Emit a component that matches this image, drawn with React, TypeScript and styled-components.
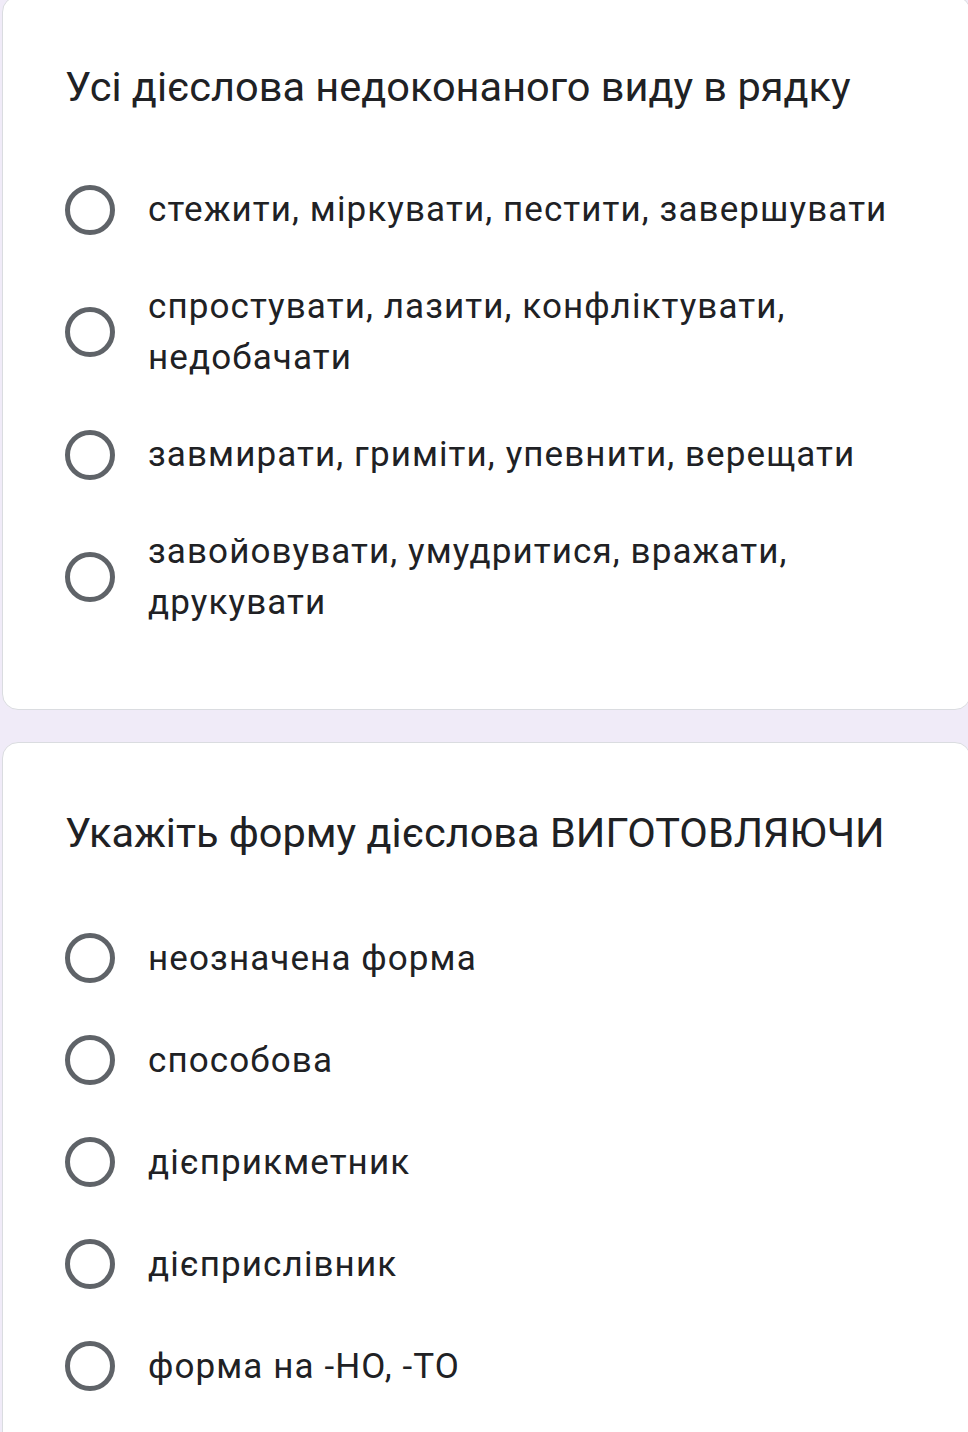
import React from "react";
import styled, { createGlobalStyle } from "styled-components";

const GlobalStyle = createGlobalStyle`
  html, body {
    margin: 0;
    padding: 0;
    background: #f0ebf8;
    overflow-x: hidden;
  }
`;

const Page = styled.main`
  display: flex;
  flex-direction: column;
  gap: 32px;
  margin-top: -4px;
  padding-left: 2px;
  width: calc(100% + 3px);
  box-sizing: border-box;
`;

const Card = styled.section`
  background: #ffffff;
  border: 1px solid #dadce0;
  border-radius: 16px;
  padding: 64px 48px 58px 62px;
`;

const Title = styled.h2`
  margin: 0 0 48px 0;
  font-family: Roboto, "Noto Sans", sans-serif;
  font-weight: 400;
  font-size: 41.5px;
  line-height: 52px;
  color: #202124;
`;

const OptionList = styled.div`
  display: flex;
  flex-direction: column;
`;

const Option = styled.label<{ $compact?: boolean }>`
  display: flex;
  align-items: center;
  gap: 33px;
  padding: ${({ $compact }) => ($compact ? "23px 0" : "25.5px 0")};
`;

const Radio = styled.span`
  flex: none;
  width: 50px;
  height: 50px;
  box-sizing: border-box;
  border: 5px solid #5f6368;
  border-radius: 50%;
`;

const OptionText = styled.span`
  max-width: 780px;
  font-family: Roboto, "Noto Sans", sans-serif;
  font-size: 35px;
  line-height: 51px;
  letter-spacing: 1.1px;
  color: #202124;
`;

const questions = [
  {
    title: "Усі дієслова недоконаного виду в рядку",
    compact: true,
    options: [
      "стежити, міркувати, пестити, завершувати",
      "спростувати, лазити, конфліктувати, недобачати",
      "завмирати, гриміти, упевнити, верещати",
      "завойовувати, умудритися, вражати, друкувати",
    ],
  },
  {
    title: "Укажіть форму дієслова ВИГОТОВЛЯЮЧИ",
    compact: false,
    options: [
      "неозначена форма",
      "способова",
      "дієприкметник",
      "дієприслівник",
      "форма на -НО, -ТО",
    ],
  },
];

function App() {
  return (
    <>
      <GlobalStyle />
      <Page>
        {questions.map((q) => (
          <Card key={q.title}>
            <Title>{q.title}</Title>
            <OptionList>
              {q.options.map((o) => (
                <Option key={o} $compact={q.compact}>
                  <Radio />
                  <OptionText>{o}</OptionText>
                </Option>
              ))}
            </OptionList>
          </Card>
        ))}
      </Page>
    </>
  );
}

export default App;
